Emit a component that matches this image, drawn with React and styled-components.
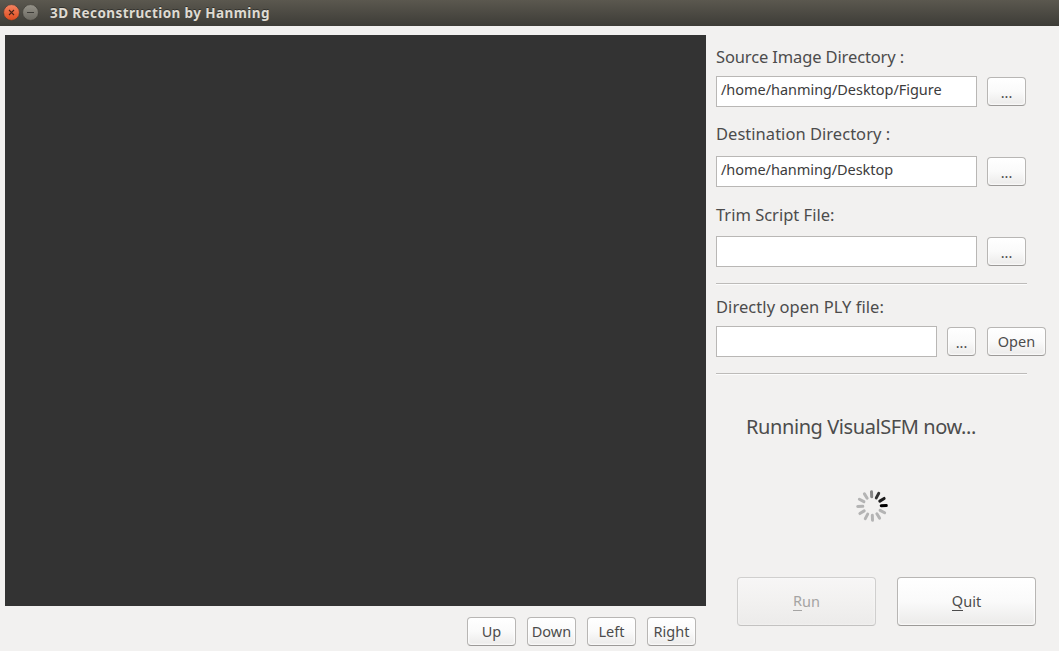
import React from "react";
import styled, { createGlobalStyle } from "styled-components";

const GlobalStyle = createGlobalStyle`
  * { box-sizing: border-box; }
  body {
    margin: 0;
    overflow: hidden;
    background: #f2f1f0;
    color: #4c4c4c;
    font-family: "Noto Sans", "Open Sans", sans-serif;
  }
`;

const Window = styled.div`
  width: 100vw;
  height: 651px;
  display: flex;
  flex-direction: column;
`;

const TitleBar = styled.header`
  height: 26px;
  flex: none;
  display: flex;
  align-items: center;
  padding-left: 3px;
  gap: 2px;
  background: linear-gradient(#5b584f, #4c4a43 50%, #3d3c37);
`;

const Title = styled.h1`
  margin: 0 0 0 9px;
  font-size: 13.5px;
  line-height: 24px;
  font-weight: 700;
  white-space: nowrap;
  letter-spacing: ${(p) => p.$spacing}px;
  color: #dfdbd2;
  text-shadow: 0 -1px 0 #33322e;
`;

const Content = styled.main`
  flex: 1;
  display: flex;
  padding: 9px 0 0 5px;
  gap: 10px;
`;

const ViewColumn = styled.section`
  width: 701px;
  flex: none;
`;

const Viewport = styled.div`
  height: 571px;
  background: #333333;
`;

const NavBar = styled.nav`
  display: flex;
  justify-content: flex-end;
  gap: 11px;
  padding: 11px 10px 0 0;
`;

const SidePanel = styled.section`
  width: 331px;
  flex: none;
`;

const Label = styled.div`
  height: ${(p) => p.$height}px;
  padding-top: ${(p) => p.$top}px;
  font-size: 16.5px;
  line-height: 22px;
  letter-spacing: ${(p) => p.$spacing}px;
  white-space: nowrap;
`;

const Row = styled.div`
  display: flex;
  align-items: center;
  height: 31px;
`;

const Field = styled.div`
  width: ${(p) => p.$width}px;
  height: 31px;
  margin-right: 10px;
  padding-left: 4px;
  border: 1px solid #b9b7b5;
  background: #fff;
  color: #3c3c3c;
  font-size: 14.5px;
  line-height: 24px;
  letter-spacing: ${(p) => p.$spacing || 0}px;
  white-space: nowrap;
`;

const Button = styled.button`
  width: ${(p) => p.$width}px;
  height: ${(p) => p.$height || 29}px;
  flex: none;
  display: flex;
  align-items: center;
  justify-content: center;
  padding: 0 0 2px;
  border: 1px solid #b8b6b4;
  border-bottom-color: #9c9a98;
  border-radius: 4px;
  background: linear-gradient(#ffffff, #fafafa 50%, #ebeae9);
  box-shadow: inset 0 0 2px 1px rgba(255, 255, 255, 0.85);
  color: #4c4c4c;
  font-family: inherit;
  font-size: 14.5px;
  line-height: 20px;
  letter-spacing: ${(p) => p.$spacing || 0}px;

  &:disabled {
    border-color: #d0cfce;
    border-bottom-color: #c3c2c1;
    background: linear-gradient(#f7f6f6, #f2f1f0 50%, #ecebea);
    box-shadow: inset 0 0 2px 1px rgba(255, 255, 255, 0.3);
    color: #a5a4a3;
  }
`;

const Dots = styled.span`
  padding-top: 2px;
`;

const Gap = styled.span`
  width: 11px;
`;

const Mnemonic = styled.span`
  border-bottom: 1px solid currentColor;
  display: inline-block;
  line-height: 19px;
`;

const Separator = styled.hr`
  width: 311px;
  height: 2px;
  margin: 16px 0 0;
  border: 0;
  border-top: 1px solid #bdbbb9;
  background: #fcfcfc;
`;

const Status = styled.div`
  margin: 38px 0 0 30px;
  height: 28px;
  font-size: 20px;
  line-height: 28px;
  letter-spacing: ${(p) => p.$spacing}px;
  white-space: nowrap;
`;

const SpinnerArea = styled.div`
  height: 136px;
  padding: 49px 0 0 140px;

  svg { display: block; }
`;

const Actions = styled.div`
  display: flex;
  gap: 21px;
  padding-left: 21px;
`;

function WindowControl({ kind }) {
  const close = kind === "close";
  return (
    <svg width="17" height="18" viewBox="0 0 17 18" fill="none">
      <defs>
        <linearGradient id={kind} x1="0" y1="0" x2="0" y2="1">
          <stop offset="0" stopColor={close ? "#f48462" : "#969389"} />
          <stop offset="1" stopColor={close ? "#df4b1d" : "#6b6962"} />
        </linearGradient>
      </defs>
      <circle cx="8.5" cy="8.5" r="7.9" fill={`url(#${kind})`} stroke="#3b3933" strokeWidth=".6" />
      {close ? (
        <path d="M6 6l5 5M11 6l-5 5" stroke="#4b2418" strokeWidth="1.1" />
      ) : (
        <path d="M5 8.5h7" stroke="#3c3b37" strokeWidth="1" />
      )}
    </svg>
  );
}

const SPOKES = ["#858585", "#333", "#1c1c1c", "#000", "#b4b4b4", "#b4b4b4", "#b4b4b4", "#b4b4b4", "#b4b4b4", "#b4b4b4", "#b4b4b4", "#b4b4b4"];

function Spinner() {
  return (
    <svg width="32" height="32" viewBox="-16 -16 32 32">
      {SPOKES.map((color, i) => (
        <path
          key={i}
          d="M0 -9.2V-14.3"
          stroke={color}
          strokeWidth="3"
          strokeLinecap="round"
          transform={`rotate(${i * 30 - 2})`}
        />
      ))}
    </svg>
  );
}

function Browse({ width = 39 }) {
  return (
    <Button $width={width} aria-label="Browse">
      <Dots>...</Dots>
    </Button>
  );
}

export default function App() {
  return (
    <>
      <GlobalStyle />
      <Window>
        <TitleBar>
          <WindowControl kind="close" />
          <WindowControl kind="minimize" />
          <Title $spacing={0.41}>3D Reconstruction by Hanming</Title>
        </TitleBar>
        <Content>
          <ViewColumn>
            <Viewport />
            <NavBar>
              <Button $width={49}>Up</Button>
              <Button $width={49}>Down</Button>
              <Button $width={49}>Left</Button>
              <Button $width={49}>Right</Button>
            </NavBar>
          </ViewColumn>
          <SidePanel>
            <Label $height={41} $top={11} $spacing={-0.13}>Source Image Directory :</Label>
            <Row>
              <Field $width={261} $spacing={-0.04}>/home/hanming/Desktop/Figure</Field>
              <Browse />
            </Row>
            <Label $height={49} $top={16} $spacing={0.03}>Destination Directory :</Label>
            <Row>
              <Field $width={261} $spacing={-0.06}>/home/hanming/Desktop</Field>
              <Browse />
            </Row>
            <Label $height={49} $top={17} $spacing={0}>Trim Script File:</Label>
            <Row>
              <Field $width={261} />
              <Browse />
            </Row>
            <Separator />
            <Label $height={41} $top={11} $spacing={0.06}>Directly open PLY file:</Label>
            <Row>
              <Field $width={221} />
              <Browse width={29} />
              <Gap />
              <Button $width={59}>Open</Button>
            </Row>
            <Separator />
            <Status $spacing={-0.41}>Running VisualSFM now...</Status>
            <SpinnerArea>
              <Spinner />
            </SpinnerArea>
            <Actions>
              <Button $width={139} $height={49} disabled>
                <Mnemonic>R</Mnemonic>un
              </Button>
              <Button $width={139} $height={49}>
                <Mnemonic>Q</Mnemonic>uit
              </Button>
            </Actions>
          </SidePanel>
        </Content>
      </Window>
    </>
  );
}
